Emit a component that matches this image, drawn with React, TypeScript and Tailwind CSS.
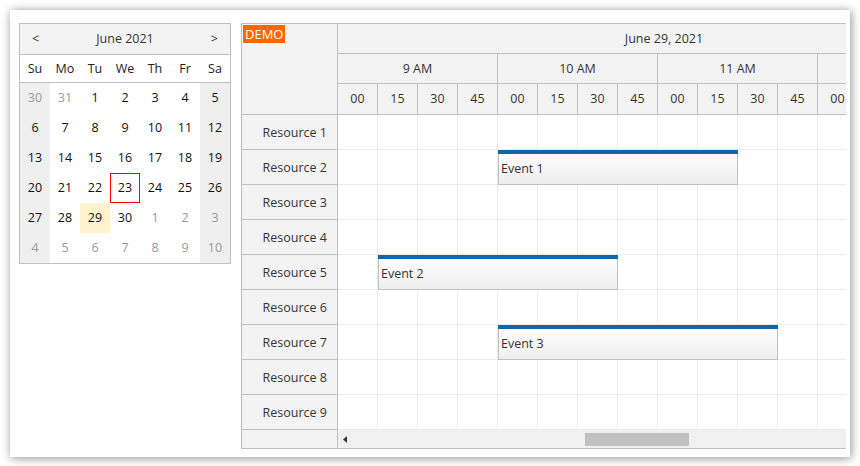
import React from "react";

const weeks: number[][] = [
  [30, 31, 1, 2, 3, 4, 5],
  [6, 7, 8, 9, 10, 11, 12],
  [13, 14, 15, 16, 17, 18, 19],
  [20, 21, 22, 23, 24, 25, 26],
  [27, 28, 29, 30, 1, 2, 3],
  [4, 5, 6, 7, 8, 9, 10],
];

function isOther(w: number, d: number) {
  if (w === 0 && d < 2) return true;
  if (w === 4 && d > 3) return true;
  if (w === 5) return true;
  return false;
}

function Calendar() {
  const names = ["Su", "Mo", "Tu", "We", "Th", "Fr", "Sa"];
  return (
    <div className="w-[212px] self-start border border-[#c0c0c0] bg-white text-[12.5px] text-[#222]">
      <div className="flex h-[31px] items-center justify-between border-b border-[#c0c0c0] bg-[#f3f3f3] px-[12px] pt-[1px] text-[#333]">
        <span>&lt;</span>
        <span>June 2021</span>
        <span>&gt;</span>
      </div>
      <div className="grid h-[28px] grid-cols-7 items-center border-b border-[#c0c0c0] pt-[1px] text-center">
        {names.map((n) => (
          <div key={n}>{n}</div>
        ))}
      </div>
      <div className="grid grid-cols-7">
        {weeks.map((row, w) =>
          row.map((d, i) => {
            const weekend = i === 0 || i === 6;
            const today = w === 4 && i === 2;
            const sel = w === 3 && i === 3;
            const bg = today ? "bg-[#fff2cc]" : weekend ? "bg-[#efefef]" : "bg-white";
            const color = isOther(w, i) ? "text-[#999]" : "text-[#111]";
            return (
              <div
                key={`${w}-${i}`}
                className={`flex h-[30px] items-center justify-center pt-[1px] ${bg} ${color} ${sel ? "border border-[#ff0000]" : ""}`}
              >
                {d}
              </div>
            );
          })
        )}
      </div>
    </div>
  );
}

const resources = Array.from({ length: 9 }, (_, i) => `Resource ${i + 1}`);
const events: Record<number, { name: string; left: number; width: number }> = {
  1: { name: "Event 1", left: 160, width: 240 },
  4: { name: "Event 2", left: 40, width: 240 },
  6: { name: "Event 3", left: 160, width: 280 },
};
const hours = ["9 AM", "10 AM", "11 AM", "12 PM"];
const mins = ["00", "15", "30", "45"];

function Scheduler() {
  return (
    <div className="flex w-[605px] self-start overflow-hidden border-b border-l border-t border-[#c0c0c0] text-[12.5px] text-[#333]">
      {/* resource column */}
      <div className="flex w-[96px] shrink-0 flex-col border-r border-[#c0c0c0] bg-[#f3f3f3]">
        <div className="h-[91px] border-b border-[#c0c0c0] pl-[1px] pt-[1px]">
          <span className="inline-block bg-[#ff6600] px-[2px] text-[13px] leading-[18px] text-white">DEMO</span>
        </div>
        {resources.map((r) => (
          <div
            key={r}
            className="flex h-[35px] items-center justify-end border-b border-[#c0c0c0] pr-[10px] pt-[2px]"
          >
            {r}
          </div>
        ))}
        <div className="h-[18px]" />
      </div>
      {/* timeline */}
      <div className="flex w-[508px] flex-col overflow-hidden">
        <div className="w-[640px]">
          <div className="h-[30px] border-b border-[#c0c0c0] bg-[#f3f3f3]">
            <div className="flex h-full w-[652px] items-center justify-center pt-[2px]">June 29, 2021</div>
          </div>
          <div className="flex h-[30px] border-b border-[#c0c0c0] bg-[#f3f3f3]">
            {hours.map((h) => (
              <div
                key={h}
                className="flex w-[160px] shrink-0 items-center justify-center border-r border-[#c0c0c0] pt-[1px]"
              >
                {h}
              </div>
            ))}
          </div>
          <div className="flex h-[31px] border-b border-[#c0c0c0] bg-[#f3f3f3]">
            {hours.map((h) =>
              mins.map((m) => (
                <div
                  key={h + m}
                  className="flex w-[40px] shrink-0 items-center justify-center border-r border-[#c0c0c0] pt-[1px]"
                >
                  {m}
                </div>
              ))
            )}
          </div>
          {resources.map((r, ri) => (
            <div key={r} className="relative flex h-[35px] border-b border-[#ebebeb] bg-white">
              {Array.from({ length: 16 }, (_, c) => (
                <div key={c} className="w-[40px] shrink-0 border-r border-[#ebebeb]" />
              ))}
              {events[ri] && (
                <div
                  className="absolute top-0 h-[35px] border-x border-b border-[#c0c0c0] bg-gradient-to-b from-white to-[#eeeeee]"
                  style={{ left: events[ri].left, width: events[ri].width }}
                >
                  <div className="-mx-[1px] h-[4px] bg-[#1066aa]" />
                  <div className="flex h-[30px] items-center pl-[2px] text-[#333]">{events[ri].name}</div>
                </div>
              )}
            </div>
          ))}
        </div>
        <div className="relative h-[18px] bg-[#f0f0f0]">
          <svg className="absolute left-[5px] top-[6px]" width="4" height="7" viewBox="0 0 4 7">
            <polygon points="4,0 0,3.5 4,7" fill="#333" />
          </svg>
          <div className="absolute left-[247px] top-[3px] h-[13px] w-[104px] bg-[#c1c1c1]" />
        </div>
      </div>
    </div>
  );
}

export default function App() {
  return (
    <div className="h-[466px] w-[860px] bg-white p-[10px] font-['Open_Sans','Noto_Sans',sans-serif]">
      <div className="flex h-[447px] w-[840px] gap-[10px] bg-white pl-[9px] pt-[13px] shadow-[1px_1px_9px_rgba(0,0,0,0.45)]">
        <Calendar />
        <Scheduler />
      </div>
    </div>
  );
}
